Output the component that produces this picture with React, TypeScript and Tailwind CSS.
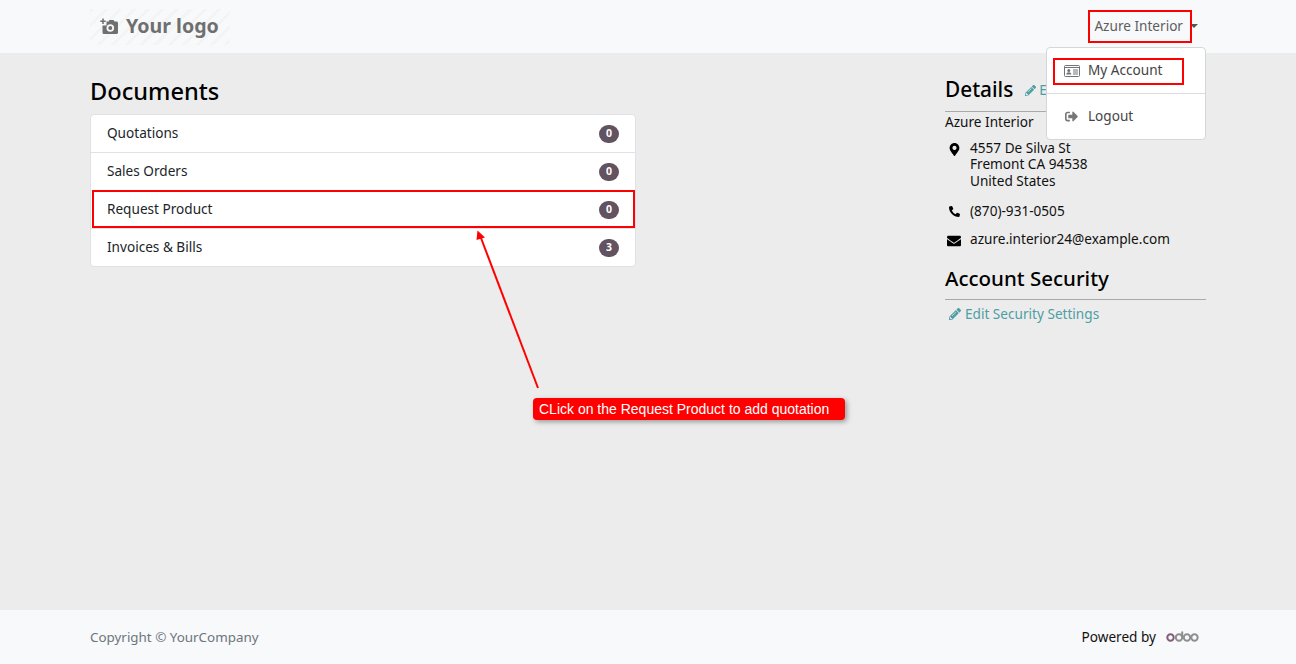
import React from "react";
import { FaPencilAlt, FaMapMarkerAlt, FaPhoneAlt, FaEnvelope, FaSignOutAlt } from "react-icons/fa";

const font = "font-['Noto_Sans','DejaVu_Sans',sans-serif]";

function Row({ label, count, boxed, last }: { label: string; count: number; boxed?: boolean; last?: boolean }) {
  return (
    <div className={"relative flex items-center justify-between pl-4 pr-4 " + (last ? "h-[37px]" : "h-[38px] border-b border-[#dee2e6]")}>
      <span className="-mt-[1px] text-[13.6px] text-[#212529]">{label}</span>
      <span className="flex h-[18px] w-[20px] items-center justify-center rounded-full bg-[#635360] text-[10.5px] font-bold text-white">{count}</span>
      {boxed && <div className="absolute left-[1px] top-[-1px] h-[38px] w-[543px] border-2 border-[#ff0000]" />}
    </div>
  );
}

function Contact({ icon, children, className }: { icon: React.ReactNode; children: React.ReactNode; className?: string }) {
  return (
    <div className={"flex " + (className ?? "")}>
      <span className="flex w-[25px] shrink-0 justify-center pr-[7px] pt-[3px] text-black">{icon}</span>
      <div className="text-[13.6px] leading-[16.5px] text-[#111]">{children}</div>
    </div>
  );
}

function LogoCamera() {
  return (
    <svg width="18" height="17" viewBox="0 0 18 17" className="shrink-0">
      <path d="M3 0.5V6M0.3 3.2H5.7" stroke="#6f6f6f" strokeWidth="1.5" fill="none" />
      <path
        fillRule="evenodd"
        fill="#6f6f6f"
        d="M6.5 3.5H8.5L9.5 2H13.5L14.5 3.5H16.5C17.3 3.5 18 4.2 18 5V14.5C18 15.3 17.3 16 16.5 16H4C3.2 16 2.5 15.3 2.5 14.5V7.5H6.5ZM10.3 6.2A3.8 3.8 0 1 0 10.31 13.8A3.8 3.8 0 1 0 10.3 6.2ZM10.3 8A2 2 0 1 1 10.29 12A2 2 0 1 1 10.3 8Z"
      />
    </svg>
  );
}

function IdCard() {
  return (
    <svg width="16" height="12" viewBox="0 0 16 12" className="shrink-0" fill="none">
      <rect x="0.5" y="0.5" width="15" height="11" rx="1" stroke="#6f7378" />
      <path d="M1 2.5H15" stroke="#6f7378" strokeWidth="1" />
      <circle cx="4.8" cy="5.4" r="1.5" fill="#6f7378" />
      <path d="M2.3 9.6C2.3 8 3.3 7.3 4.8 7.3C6.3 7.3 7.3 8 7.3 9.6Z" fill="#6f7378" />
      <path d="M9 5H14M9 7H14M9 9H14" stroke="#6f7378" strokeWidth="1" />
    </svg>
  );
}

export default function App() {
  return (
    <div className={"relative flex h-[664px] w-[1296px] flex-col overflow-hidden bg-[#ececec] " + font}>
      <header className="flex h-[53px] shrink-0 items-center justify-between bg-[#f8f9fa] pl-[90px] pr-[98px]">
        <div className="flex h-[36px] w-[140px] items-center gap-[8px] bg-[repeating-linear-gradient(135deg,#f3f4f5_0px,#f3f4f5_3px,#f8f9fa_3px,#f8f9fa_10px)] pl-[10px] text-[#6f6f6f]">
          <LogoCamera />
          <span className="-mt-[2px] text-[19.6px] font-bold leading-none">Your logo</span>
        </div>
        <div className="flex items-center gap-[7px]">
          <span className="-mt-[1px] text-[13.6px] text-[#5e5e5e]">Azure Interior</span>
          <span className="mt-[-1px] h-0 w-0 border-x-[4px] border-t-[4px] border-x-transparent border-t-[#555]" />
        </div>
      </header>

      <main className="flex flex-1 justify-between pl-[90px] pr-[90px] pt-[23px]">
        <section className="w-[546px]">
          <h3 className="mb-[8px] text-[23.6px] font-medium leading-[30px] text-black">Documents</h3>
          <div className="rounded-[4px] border border-[#dee2e6] bg-white">
            <Row label="Quotations" count={0} />
            <Row label="Sales Orders" count={0} />
            <Row label="Request Product" count={0} boxed />
            <Row label="Invoices & Bills" count={3} last />
          </div>
        </section>

        <aside className="w-[261px]">
          <div className="flex h-[36px] items-center gap-[12px] border-b border-[#a9a9a9] pb-[7px]">
            <h4 className="-mt-[2px] text-[20.8px] font-medium leading-[26px] text-black">Details</h4>
            <span className="mt-[1px] flex items-center gap-[3px] text-[13.6px] text-[#4d9ea5]"><FaPencilAlt className="text-[11px]" />Edit</span>
          </div>
          <div className="mt-[1px] text-[13.6px] leading-[18px] text-[#111]">Azure Interior</div>
          <Contact className="mt-[8.7px]" icon={<FaMapMarkerAlt className="text-[13px]" />}>
            4557 De Silva St<br />Fremont CA 94538<br />United States
          </Contact>
          <Contact className="mt-[13.8px]" icon={<FaPhoneAlt className="text-[11px]" />}>(870)-931-0505</Contact>
          <Contact className="mt-[11.5px]" icon={<FaEnvelope className="text-[14px]" />}>azure.interior24@example.com</Contact>
          <div className="mt-[15px] flex h-[37px] items-center border-b border-[#a9a9a9] pb-[6px]">
            <h4 className="text-[20.5px] font-medium leading-[26px] text-black">Account Security</h4>
          </div>
          <div className="mt-[4px] flex items-center gap-[4px] pl-[4px] text-[13.6px] text-[#4d9ea5]">
            <FaPencilAlt className="text-[12px]" />Edit Security Settings
          </div>
        </aside>
      </main>

      <footer className="flex h-[54px] shrink-0 items-center justify-between bg-[#f8f9fa] pl-[90px] pr-[97px]">
        <span className="text-[13.4px] text-[#6c757d]">Copyright © YourCompany</span>
        <div className="flex items-center gap-[10px]">
          <span className="text-[13.6px] text-[#111]">Powered by</span>
          <svg width="33" height="12" viewBox="0 0 33 12" fill="none">
            <circle cx="4.5" cy="6.5" r="3.2" stroke="#875a7b" strokeWidth="2" />
            <circle cx="13" cy="6.5" r="3.2" stroke="#8f8f8f" strokeWidth="2" />
            <path d="M16.2 0.5V6.5" stroke="#8f8f8f" strokeWidth="2" />
            <circle cx="21" cy="6.5" r="3.2" stroke="#8f8f8f" strokeWidth="2" />
            <circle cx="28.5" cy="6.5" r="3.2" stroke="#8f8f8f" strokeWidth="2" />
          </svg>
        </div>
      </footer>

      {/* Header highlight */}
      <div className="absolute left-[1088px] top-[10px] h-[33px] w-[104px] border-2 border-[#ff0000]" />

      {/* Dropdown */}
      <div className="absolute left-[1046px] top-[47px] h-[93px] w-[160px] rounded-[4px] border border-[#d4d6d8] bg-white">
        <div className="flex h-[46px] items-center gap-[8px] border-b border-[#dcdcdc] pl-[17px]">
          <IdCard />
          <span className="text-[13.6px] text-[#444]">My Account</span>
        </div>
        <div className="flex h-[45px] items-center gap-[10px] pl-[18px]">
          <FaSignOutAlt className="text-[13px] text-[#777]" />
          <span className="-mt-[1px] text-[13.6px] text-[#444]">Logout</span>
        </div>
        <div className="absolute left-[6px] top-[10px] h-[27px] w-[131px] border-2 border-[#ff0000]" />
      </div>

      {/* Arrow annotation */}
      <svg className="absolute left-[470px] top-[225px]" width="75" height="170" viewBox="0 0 75 170" fill="none">
        <path d="M68 163L11 13" stroke="#ff0000" strokeWidth="2" />
        <path d="M7.5 5.5L15 12.5L6.5 15Z" fill="#ff0000" />
      </svg>

      {/* Callout */}
      <div className="absolute left-[533px] top-[398px] flex h-[22px] w-[312px] items-center rounded-[4px] bg-[#ff0000] pl-[6px] font-['Liberation_Sans',sans-serif] text-[14px] text-white shadow-[2px_2px_5px_rgba(0,0,0,0.35)]">
        CLick on the Request Product to add quotation
      </div>
    </div>
  );
}
